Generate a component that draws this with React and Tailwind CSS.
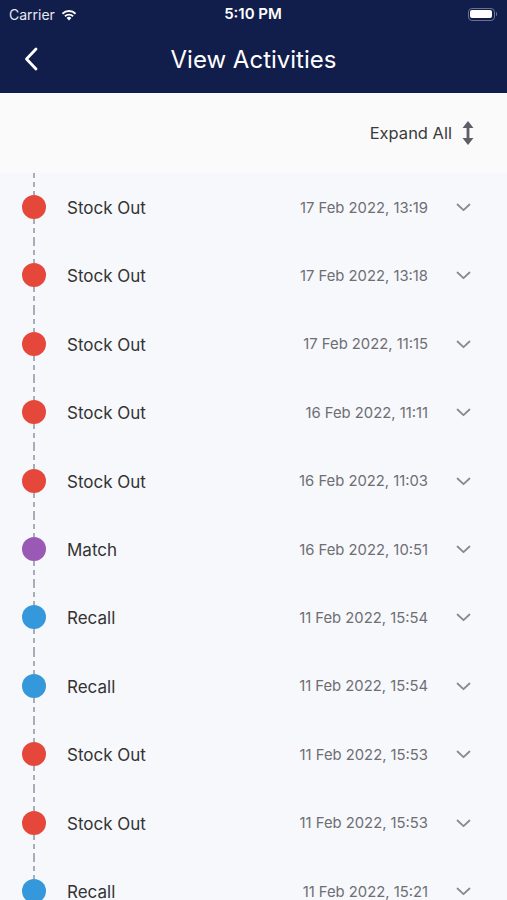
import React from "react";

const items = [
  ["Stock Out", "17 Feb 2022, 13:19", "red"],
  ["Stock Out", "17 Feb 2022, 13:18", "red"],
  ["Stock Out", "17 Feb 2022, 11:15", "red"],
  ["Stock Out", "16 Feb 2022, 11:11", "red"],
  ["Stock Out", "16 Feb 2022, 11:03", "red"],
  ["Match", "16 Feb 2022, 10:51", "purple"],
  ["Recall", "11 Feb 2022, 15:54", "blue"],
  ["Recall", "11 Feb 2022, 15:54", "blue"],
  ["Stock Out", "11 Feb 2022, 15:53", "red"],
  ["Stock Out", "11 Feb 2022, 15:53", "red"],
  ["Recall", "11 Feb 2022, 15:21", "blue"],
];

const dotClass = {
  red: "bg-[#e5483b]",
  purple: "bg-[#9b59b6]",
  blue: "bg-[#3498db]",
};

function Dashes() {
  return (
    <div className="w-[2px] flex-1 bg-[repeating-linear-gradient(to_bottom,#a9adb8_0px,#a9adb8_5px,transparent_5px,transparent_9px)]" />
  );
}

function Row({ label, date, color }) {
  return (
    <div className="flex h-[68.4px] items-center">
      <div className="flex h-full w-[68px] shrink-0 flex-col items-center pr-[1px]">
        <Dashes />
        <div className={`h-[24px] w-[24px] shrink-0 rounded-full ${dotClass[color]}`} />
        <Dashes />
      </div>
      <div className="-ml-[1px] flex-1 pt-[3px] text-[17px] leading-none text-[#333]">{label}</div>
      <div className="pt-[2px] text-[14.8px] leading-none text-[#6e6e73]">{date}</div>
      <div className="ml-[28px] mr-[36px] flex w-[15px] justify-center pt-[1px]">
        <svg width="15" height="9" viewBox="0 0 15 9" fill="none">
          <path d="M1.5 1.5 L7.5 7.2 L13.5 1.5" stroke="#8a8a8e" strokeWidth="1.8" strokeLinecap="round" strokeLinejoin="round" />
        </svg>
      </div>
    </div>
  );
}

export default function App() {
  return (
    <div className="flex h-[900px] w-[507px] flex-col overflow-hidden bg-[#f7f8fc] font-['Inter',sans-serif]">
      <div className="shrink-0 bg-[#111d4a]">
        <div className="flex h-[28px] items-center px-[9px] text-white">
          <div className="flex flex-1 items-center gap-[5px] text-[14px] text-[#e6e8f0]">
            <span>Carrier</span>
            <svg width="18" height="13" viewBox="0 0 18 13">
              <path d="M9 12.5 L6.6 9.9 A3.4 3.4 0 0 1 11.4 9.9 Z" fill="white" />
              <path d="M4.3 7.6 A6.6 6.6 0 0 1 13.7 7.6 L12.4 8.9 A4.8 4.8 0 0 0 5.6 8.9 Z" fill="white" />
              <path d="M1.8 5.1 A10.1 10.1 0 0 1 16.2 5.1 L14.9 6.4 A8.3 8.3 0 0 0 3.1 6.4 Z" fill="white" />
            </svg>
          </div>
          <div className="text-[15px] font-semibold">5:10 PM</div>
          <div className="flex flex-1 justify-end pr-[1px]">
            <div className="flex items-center">
              <div className="flex h-[13px] w-[27px] items-center rounded-[4px] border border-[#6a7190] p-[1.5px]">
                <div className="h-full w-full rounded-[2px] bg-white" />
              </div>
              <div className="ml-[1px] h-[4px] w-[1.5px] rounded-r bg-[#6a7190]" />
            </div>
          </div>
        </div>
        <div className="flex h-[65px] items-center">
          <div className="flex w-[60px] justify-center pl-[1px] pb-[3px]">
            <svg width="14" height="24" viewBox="0 0 14 24" fill="none">
              <path d="M12 2 L2.5 12 L12 22" stroke="white" strokeWidth="2.8" strokeLinecap="round" strokeLinejoin="round" />
            </svg>
          </div>
          <div className="flex-1 pb-[2px] text-center text-[24px] text-white">View Activities</div>
          <div className="w-[60px]" />
        </div>
      </div>
      <div className="flex h-[79.8px] shrink-0 items-center justify-end gap-[9px] bg-[#fafafa] pr-[32px] pt-[1px]">
        <span className="text-[16.5px] text-[#3a3a3c]">Expand All</span>
        <svg width="14" height="26" viewBox="0 0 14 26">
          <path d="M7 1 L12.5 8 L8.4 8 L8.4 18 L12.5 18 L7 25 L1.5 18 L5.6 18 L5.6 8 L1.5 8 Z" fill="#5d5e66" />
        </svg>
      </div>
      <div className="flex flex-col">
        {items.map(([l, d, c], i) => (
          <Row key={i} label={l} date={d} color={c} />
        ))}
      </div>
    </div>
  );
}
